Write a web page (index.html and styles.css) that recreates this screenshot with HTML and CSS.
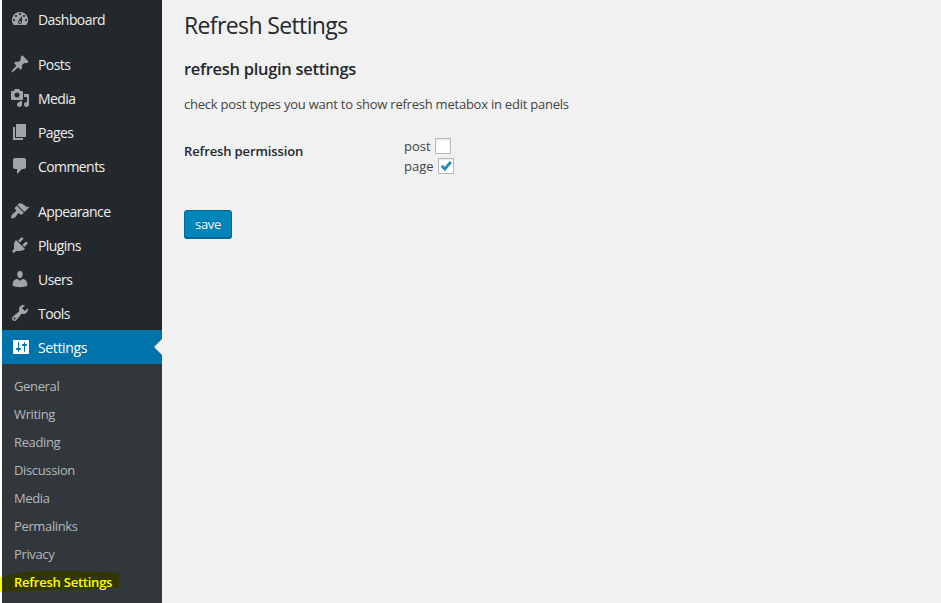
FILE: index.html
```html
<!DOCTYPE html>
<html lang="en">
<head>
<meta charset="utf-8">
<title>Refresh Settings</title>
<link rel="stylesheet" href="styles.css">
</head>
<body>
<div class="layout">
<nav class="sidebar">
<ul class="menu">
<li class="item"><svg viewBox="0 0 20 20"><path d="M3.76 16h12.48A7.998 7.998 0 0 0 10 3a7.998 7.998 0 0 0-6.24 13zM10 4c.55 0 1 .45 1 1s-.45 1-1 1-1-.45-1-1 .45-1 1-1zM6 6c.55 0 1 .45 1 1s-.45 1-1 1-1-.45-1-1 .45-1 1-1zm8 0c.55 0 1 .45 1 1s-.45 1-1 1-1-.45-1-1 .45-1 1-1zm-5.37 5.55L12 7v6c0 1.1-.9 2-2 2s-2-.9-2-2c0-.57.24-1.08.63-1.45zM4 10c.55 0 1 .45 1 1s-.45 1-1 1-1-.45-1-1 .45-1 1-1zm12 0c.55 0 1 .45 1 1s-.45 1-1 1-1-.45-1-1 .45-1 1-1zm-5 3c0-.55-.45-1-1-1s-1 .45-1 1 .45 1 1 1 1-.45 1-1z"/></svg><span>Dashboard</span></li>
<li class="item spaced"><svg viewBox="0 0 20 20"><path d="M10.44 3.02l1.82-1.82 6.36 6.35-1.83 1.82c-1.05-.68-2.48-.57-3.41.36l-.75.75c-.92.93-1.04 2.35-.35 3.41l-1.83 1.82-2.41-2.41-2.8 2.79c-.42.42-3.38 2.71-3.8 2.29s1.86-3.39 2.28-3.81l2.79-2.79L4.1 9.36l1.83-1.82c1.05.69 2.48.57 3.4-.36l.75-.75c.93-.92 1.05-2.35.36-3.41z"/></svg><span>Posts</span></li>
<li class="item"><svg viewBox="0 0 20 20"><path d="M13 11V4c0-.55-.45-1-1-1h-1.67L9 1H5L3.67 3H2c-.55 0-1 .45-1 1v7c0 .55.45 1 1 1h10c.55 0 1-.45 1-1zM7 4.5c1.38 0 2.5 1.12 2.5 2.5S8.38 9.5 7 9.5 4.5 8.38 4.5 7 5.62 4.5 7 4.5zM14 6h5v10.5c0 1.38-1.12 2.5-2.5 2.5S14 17.88 14 16.5s1.12-2.5 2.5-2.5c.17 0 .34.02.5.05V9h-3V6zm-4 8.05V13h2v3.5c0 1.38-1.12 2.5-2.5 2.5S7 17.88 7 16.5 8.12 14 9.5 14c.17 0 .34.02.5.05z"/></svg><span>Media</span></li>
<li class="item"><svg viewBox="0 0 20 20"><path d="M6 15V2h10v13H6zm-1 1h8v2H3V5h2v11z"/></svg><span>Pages</span></li>
<li class="item"><svg viewBox="0 0 20 20"><path d="M5 2h9c1.1 0 2 .9 2 2v7c0 1.1-.9 2-2 2h-2l-5 5v-5H5c-1.1 0-2-.9-2-2V4c0-1.1.9-2 2-2z"/></svg><span>Comments</span></li>
<li class="item spaced"><svg viewBox="0 0 20 20"><path d="M14.48 11.06L7.41 3.99l1.5-1.5c.5-.56 2.3-.47 3.51.32 1.21.8 1.43 1.28 2.91 2.1 1.18.64 2.45 1.26 4.45.85zm-.71.71L6.7 4.7 4.93 6.47c-.39.39-.39 1.02 0 1.41l1.06 1.06c.39.39.39 1.03 0 1.42-.6.6-1.43 1.11-2.21 1.69-.35.26-.7.53-1.01.84C1.43 14.23.4 16.08 1.4 17.07c.99 1 2.84-.03 4.18-1.36.31-.31.58-.66.85-1.02.57-.78 1.08-1.61 1.69-2.21.39-.39 1.02-.39 1.41 0l1.06 1.06c.39.39 1.02.39 1.41 0z"/></svg><span>Appearance</span></li>
<li class="item"><svg viewBox="0 0 20 20"><path d="M13.11 4.36L9.87 7.6 8 5.73l3.24-3.24c.35-.34 1.05-.2 1.56.32.52.51.66 1.21.31 1.55zm-8 1.77l.91-1.12 9.01 9.01-1.19.84c-.71.71-2.63 1.16-3.82 1.16H6.14L4.9 17.26c-.59.59-1.54.59-2.12 0-.59-.58-.59-1.53 0-2.12l1.24-1.24v-3.88c0-1.13.4-3.19 1.09-3.89zm7.26 3.97l3.24-3.24c.34-.35 1.04-.21 1.55.31.52.51.66 1.21.31 1.55l-3.24 3.25z"/></svg><span>Plugins</span></li>
<li class="item"><svg viewBox="0 0 20 20"><path d="M10 9.25c-2.27 0-2.73-3.44-2.73-3.44C7 4.02 7.82 2 9.97 2c2.16 0 2.98 2.02 2.71 3.81 0 0-.41 3.44-2.68 3.44zm0 2.57L12.72 10c2.39 0 4.52 2.33 4.52 4.53v2.49s-3.65 1.13-7.24 1.13c-3.65 0-7.24-1.13-7.24-1.13v-2.49c0-2.25 1.94-4.48 4.47-4.48z"/></svg><span>Users</span></li>
<li class="item"><svg viewBox="0 0 20 20"><path d="M16.68 9.77c-1.34 1.34-3.3 1.67-4.95.99l-5.41 6.52c-.99.99-2.59.99-3.58 0s-.99-2.59 0-3.57l6.52-5.42c-.68-1.65-.35-3.61.99-4.95 1.28-1.28 3.12-1.62 4.72-1.06l-2.89 2.89 2.82 2.82 2.86-2.87c.53 1.58.18 3.39-1.08 4.65zM3.81 16.21c.4.39 1.04.39 1.43 0 .4-.4.4-1.04 0-1.43-.39-.4-1.03-.4-1.43 0-.39.39-.39 1.03 0 1.43z"/></svg><span>Tools</span></li>
<li class="item current"><svg viewBox="0 0 20 20"><path d="M18 16V4c0-.55-.45-1-1-1H3c-.55 0-1 .45-1 1v12c0 .55.45 1 1 1h14c.55 0 1-.45 1-1zM8 11h1c.55 0 1 .45 1 1s-.45 1-1 1H8v1.5c0 .28-.22.5-.5.5s-.5-.22-.5-.5V13H6c-.55 0-1-.45-1-1s.45-1 1-1h1V5.5c0-.28.22-.5.5-.5s.5.22.5.5V11zm5-2h-1c-.55 0-1-.45-1-1s.45-1 1-1h1V5.5c0-.28.22-.5.5-.5s.5.22.5.5V7h1c.55 0 1 .45 1 1s-.45 1-1 1h-1v5.5c0 .28-.22.5-.5.5s-.5-.22-.5-.5V9z"/></svg><span>Settings</span></li>
</ul>
<ul class="submenu">
<li>General</li>
<li>Writing</li>
<li>Reading</li>
<li>Discussion</li>
<li>Media</li>
<li>Permalinks</li>
<li>Privacy</li>
<li class="active"><svg class="marker" viewBox="0 0 119 23"><path class="spill" d="M0 7H2V22H0z"/><path class="ink" d="M2 7L18 3Q45 0 75 1L119 3V18L90 19Q40 20 2 22z"/></svg><span>Refresh Settings</span></li>
</ul>
</nav>
<main class="content">
<h1>Refresh Settings</h1>
<h2>refresh plugin settings</h2>
<p>check post types you want to show refresh metabox in edit panels</p>
<div class="field">
<div class="field-name">Refresh permission</div>
<div class="options">
<label><span>post</span><i class="box"></i></label>
<label><span>page</span><i class="box"><svg viewBox="0 0 14 14"><path d="M2.8 6.8L5.8 10.2L11.8 2.8"/></svg></i></label>
</div>
</div>
<button class="save" type="button">save</button>
</main>
</div>
</body>
</html>
```
FILE: styles.css
```css
* { box-sizing: border-box; }
body {
  margin: 0;
  background: #f1f1f1;
  color: #444;
  font: 13px/20px "Open Sans", "Noto Sans", sans-serif;
  overflow: hidden;
}
ul { list-style: none; margin: 0; padding: 0; }
.layout { display: flex; height: 603px; border-left: 2px solid #fff; }
.sidebar { width: 160px; background: #23282d; display: flex; flex-direction: column; }
.menu { padding-top: 2px; }
.item {
  display: flex;
  align-items: center;
  height: 34px;
  padding-left: 8px;
  gap: 8px;
  color: #eee;
  font-size: 14px;
  letter-spacing: -0.58px;
  line-height: 18px;
  white-space: nowrap;
}
.item span { padding-top: 2px; }
.item svg { width: 20px; height: 20px; fill: #a0a5aa; flex: none; }
.spaced { margin-top: 11px; }
.current {
  background: #0073aa;
  color: #fff;
  position: relative;
  letter-spacing: -0.35px;
}
.current svg { fill: #fff; margin: 0 -1px 0 1px; }
.current::after {
  content: "";
  position: absolute;
  right: 0;
  top: 9px;
  border: 8px solid transparent;
  border-left: 0;
  border-right-color: #f1f1f1;
}
.submenu {
  flex: 1;
  background: #32373c;
  padding: 8px 0 0 12px;
  color: #b4b9be;
  letter-spacing: -0.36px;
}
.submenu li { height: 28px; line-height: 28px; }
.submenu .active { position: relative; color: #ff0; font-weight: 600; letter-spacing: -0.23px; }
.submenu .active span { position: relative; }
.marker { position: absolute; left: -14px; top: 2px; width: 119px; height: 23px; }
.spill { fill: #ff0; }
.ink { fill: #323700; }
.content { flex: 1; padding: 10px 0 0 22px; }
h1, h2, p { margin: 0; white-space: nowrap; }
h1 { color: #23282d; font-size: 23px; font-weight: 400; line-height: 30px; letter-spacing: -0.62px; }
h2 { margin-top: 19px; color: #23282d; font-size: 16.5px; font-weight: 600; line-height: 20px; letter-spacing: -0.29px; }
p { margin-top: 15px; letter-spacing: -0.23px; }
.field { display: flex; margin-top: 22px; }
.field-name { width: 220px; padding-top: 5px; color: #23282d; font-weight: 600; letter-spacing: -0.12px; }
.options label { display: flex; align-items: center; height: 20px; gap: 4px; }
.box {
  width: 16px;
  height: 16px;
  background: #fff;
  border: 1px solid #b4b9be;
  box-shadow: inset 0 1px 2px rgba(0, 0, 0, .1);
}
.box svg { display: block; width: 14px; height: 14px; fill: none; stroke: #1e8cbe; stroke-width: 2.8; }
.save {
  display: block;
  margin-top: 34px;
  width: 48px;
  height: 28px;
  padding: 0;
  border: 1px solid #006799;
  border-radius: 3px;
  background: #0085ba;
  box-shadow: 0 1px 0 #006799;
  color: #fff;
  font: 13px/26px "Open Sans", sans-serif;
  letter-spacing: -0.3px;
  text-shadow: 0 -1px 1px #006799;
}
```
